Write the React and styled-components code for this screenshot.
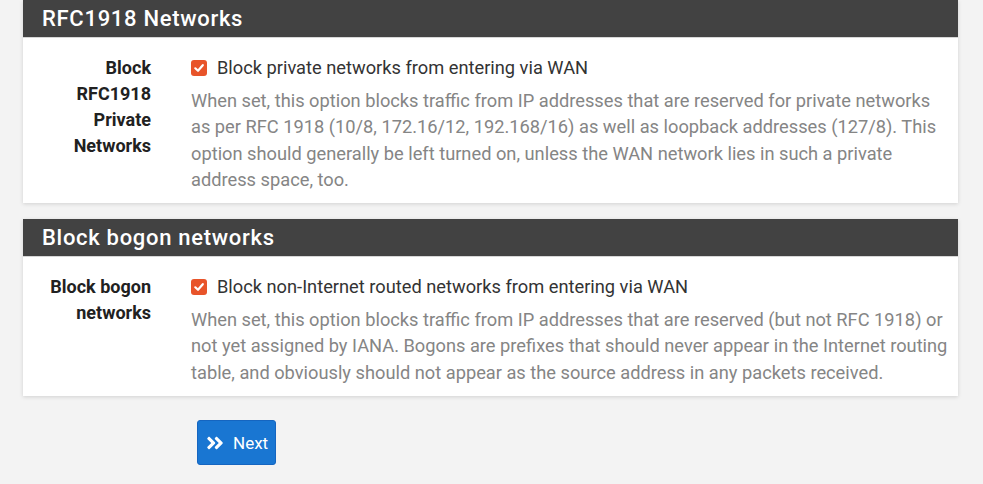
import React from "react";
import styled, { createGlobalStyle } from "styled-components";
import { FaAngleDoubleRight } from "react-icons/fa";

const Global = createGlobalStyle`
  html, body { margin: 0; padding: 0; background: #f3f3f3; }
  body { font-family: Roboto, "Noto Sans", sans-serif; }
  * { box-sizing: border-box; }
`;

const Page = styled.div`
  width: 983px;
  height: 484px;
  overflow: hidden;
  background: #f3f3f3;
  padding: 0 25px 0 23px;
  display: flex;
  flex-direction: column;
  gap: 16px;
`;

const Panel = styled.section`
  background: #fff;
  box-shadow: 0 1px 4px rgba(0, 0, 0, 0.14);
`;

const PanelHeader = styled.h2`
  margin: 0;
  height: 38px;
  display: flex;
  align-items: center;
  padding-left: 19px;
  background: #424242;
  color: #fff;
  font-size: 22px;
  font-weight: 500;
  letter-spacing: 0.7px;
  border-bottom: 1px solid #d6d6d6;
`;

const PanelBody = styled.div`
  padding: 17px 9px 10px 0;
`;

const Row = styled.div`
  display: grid;
  grid-template-columns: 128px 1fr;
  column-gap: 40px;
`;

const Label = styled.div`
  text-align: right;
  font-weight: 700;
  font-size: 18px;
  line-height: 26px;
  color: #212121;
`;

const Field = styled.div`
  display: flex;
  flex-direction: column;
`;

const CheckLine = styled.label`
  display: flex;
  align-items: center;
  gap: 10px;
  font-size: 18.25px;
  line-height: 26px;
  color: #333;
`;

const Box = styled.span`
  width: 16px;
  height: 16px;
  border-radius: 3px;
  background: #e8542a;
  display: inline-flex;
  align-items: center;
  justify-content: center;
  flex: none;
`;

const Help = styled.p`
  margin: 7px 0 0;
  font-size: 18.25px;
  line-height: 26.3px;
  color: #858585;
`;

const Actions = styled.div`
  padding-left: 174px;
  padding-top: 8px;
`;

const NextButton = styled.button`
  display: inline-flex;
  align-items: center;
  gap: 8px;
  height: 45px;
  padding: 0 7px 0 7px;
  background: #1976d2;
  border: 1px solid #1565c0;
  border-radius: 3px;
  color: #fff;
  font-family: Roboto, sans-serif;
  font-size: 17px;
`;

function Checkbox() {
  return (
    <Box>
      <svg width="12" height="12" viewBox="0 0 12 12">
        <path d="M2.3 6.3 L5 8.8 L9.8 3.2" fill="none" stroke="#fff" strokeWidth="2.2" strokeLinecap="round" strokeLinejoin="round" />
      </svg>
    </Box>
  );
}

function Section({ title, label, check, help }) {
  return (
    <Panel>
      <PanelHeader>{title}</PanelHeader>
      <PanelBody>
        <Row>
          <Label>{label}</Label>
          <Field>
            <CheckLine>
              <Checkbox />
              {check}
            </CheckLine>
            <Help>{help}</Help>
          </Field>
        </Row>
      </PanelBody>
    </Panel>
  );
}

export default function App() {
  return (
    <>
      <Global />
      <Page>
        <Section
          title="RFC1918 Networks"
          label={<>Block<br />RFC1918<br />Private<br />Networks</>}
          check="Block private networks from entering via WAN"
          help="When set, this option blocks traffic from IP addresses that are reserved for private networks as per RFC 1918 (10/8, 172.16/12, 192.168/16) as well as loopback addresses (127/8). This option should generally be left turned on, unless the WAN network lies in such a private address space, too."
        />
        <Section
          title="Block bogon networks"
          label={<>Block bogon<br />networks</>}
          check="Block non-Internet routed networks from entering via WAN"
          help="When set, this option blocks traffic from IP addresses that are reserved (but not RFC 1918) or not yet assigned by IANA. Bogons are prefixes that should never appear in the Internet routing table, and obviously should not appear as the source address in any packets received."
        />
        <Actions>
          <NextButton>
            <FaAngleDoubleRight size={20} />
            Next
          </NextButton>
        </Actions>
      </Page>
    </>
  );
}
